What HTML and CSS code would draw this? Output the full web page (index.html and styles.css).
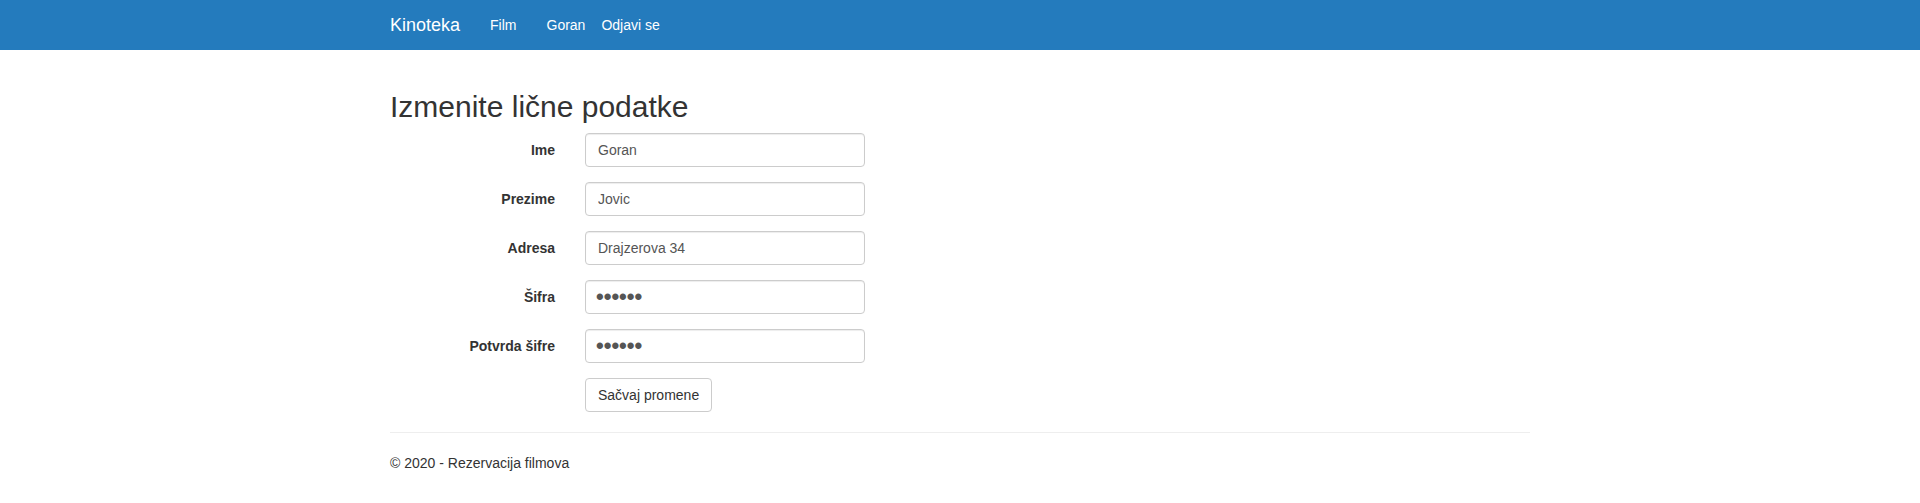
FILE: index.html
```html
<!DOCTYPE html>
<html lang="sr">
<head>
<meta charset="utf-8">
<title>Izmenite lične podatke - Kinoteka</title>
<link rel="stylesheet" href="styles.css">
</head>
<body>
<nav class="navbar">
  <div class="nav-inner">
    <a class="brand" href="#">Kinoteka</a>
    <ul class="nav">
      <li><a href="#">Film</a></li>
    </ul>
    <ul class="nav">
      <li><a href="#">Goran</a></li>
      <li><button class="logout" type="button">Odjavi se</button></li>
    </ul>
  </div>
</nav>
<main class="content">
  <h2 class="title">Izmenite lične podatke</h2>
  <form class="form">
    <div class="form-group">
      <label class="label" for="ime">Ime</label>
      <div class="control"><input id="ime" class="input" type="text" value="Goran"></div>
    </div>
    <div class="form-group">
      <label class="label" for="prezime">Prezime</label>
      <div class="control"><input id="prezime" class="input" type="text" value="Jovic"></div>
    </div>
    <div class="form-group">
      <label class="label" for="adresa">Adresa</label>
      <div class="control"><input id="adresa" class="input" type="text" value="Drajzerova 34"></div>
    </div>
    <div class="form-group">
      <label class="label" for="sifra">Šifra</label>
      <div class="control"><input id="sifra" class="input input-password" type="password" value="123456"></div>
    </div>
    <div class="form-group">
      <label class="label" for="potvrda">Potvrda šifre</label>
      <div class="control"><input id="potvrda" class="input input-password" type="password" value="123456"></div>
    </div>
    <div class="form-group">
      <span class="label"></span>
      <div class="control"><button class="btn" type="button">Sačvaj promene</button></div>
    </div>
  </form>
  <hr class="rule">
  <footer class="footer">
    <p>© 2020 - Rezervacija filmova</p>
  </footer>
</main>
</body>
</html>
```

FILE: styles.css
```css
* { box-sizing: border-box; }
html, body { margin: 0; padding: 0; }
body {
  font-family: "Liberation Sans", Arial, Helvetica, sans-serif;
  font-size: 14px;
  line-height: 1.42857143;
  color: #333;
  background: #fff;
}
.navbar {
  background: #247bbd;
  height: 50px;
}
.nav-inner {
  width: 1170px;
  margin: 0 auto;
  display: flex;
  align-items: flex-start;
}
.brand {
  display: block;
  padding: 15px;
  font-size: 18px;
  line-height: 20px;
  height: 50px;
  color: #fff;
  text-decoration: none;
}
.nav {
  list-style: none;
  margin: 0;
  padding: 0;
  display: flex;
}
.nav a {
  display: block;
  padding: 15px;
  line-height: 20px;
  color: #fff;
  text-decoration: none;
}
.logout {
  display: block;
  margin: 0;
  padding: 15px 0 15px 1px;
  border: 0;
  background: none;
  font: inherit;
  line-height: 20px;
  color: #fff;
  cursor: pointer;
}
.content {
  width: 1170px;
  margin: 40px auto 0;
  padding: 0 15px 20px;
}
.title {
  font-size: 30px;
  font-weight: 500;
  line-height: 1.1;
  margin: 0 0 10px;
  color: #333;
}
.form { margin: 0; }
.form-group {
  display: grid;
  grid-template-columns: 195px 1fr;
  margin: 0 -15px 15px;
}
.label {
  padding: 7px 15px 0;
  text-align: right;
  font-weight: bold;
  line-height: 20px;
}
.control {
  padding: 0 15px;
}
.input {
  display: block;
  width: 280px;
  height: 34px;
  padding: 6px 12px;
  font-family: inherit;
  font-size: 14px;
  line-height: 1.42857143;
  color: #555;
  background: #fff;
  border: 1px solid #ccc;
  border-radius: 4px;
  box-shadow: inset 0 1px 1px rgba(0,0,0,.075);
  margin: 0;
}
.input-password {
  font-size: 22px;
  font-weight: bold;
  line-height: 20px;
  padding: 6px 10px;
}
.btn {
  display: inline-block;
  height: 34px;
  padding: 6px 12px;
  font-family: inherit;
  font-size: 14px;
  line-height: 1.42857143;
  color: #333;
  background: #fff;
  border: 1px solid #ccc;
  border-radius: 4px;
  margin: 0;
}
.rule {
  margin: 20px 0;
  border: 0;
  border-top: 1px solid #eee;
}
.footer p { margin: 0 0 10px; }
```
